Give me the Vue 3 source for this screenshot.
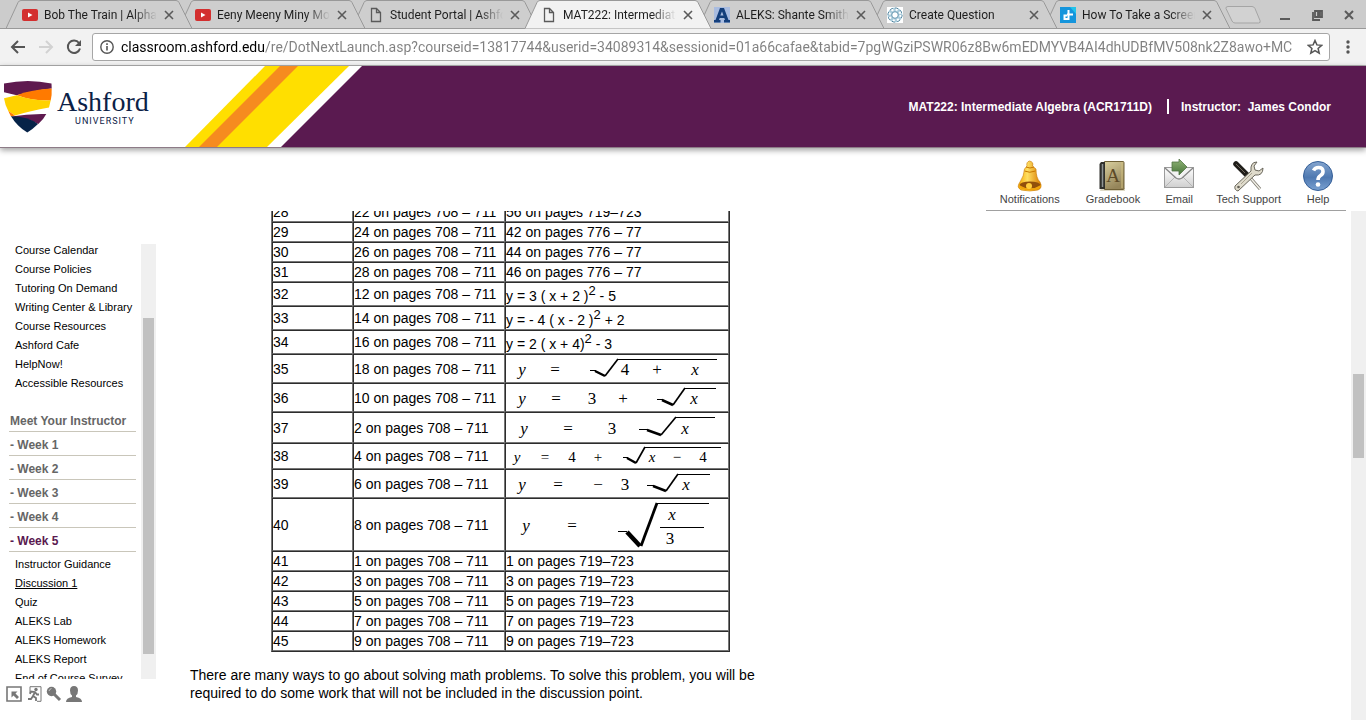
<template>
  <div class="browser">

    <!-- Tab strip -->
    <div class="tab-strip">
      <div
        v-for="(tab, i) in tabs"
        :key="tab.title"
        class="tab"
        :class="{ active: tab.active }"
        :style="{ zIndex: tab.active ? 20 : 10 - i }"
      >
        <svg class="tab-shape" viewBox="0 0 186 29" preserveAspectRatio="none">
          <path d="M0 28.5 L12 2.5 Q13 .5 15 .5 H170 Q172 .5 173 2.5 L186 28.5" />
        </svg>
        <svg class="favicon" viewBox="0 0 16 16">
          <template v-if="tab.icon === 'youtube'">
            <rect x="0" y="2" width="16" height="12" rx="2" fill="#d32f2f" />
            <path d="M6 5.5v5l4.500-2.500z" fill="#fff" />
          </template>
          <path v-else-if="tab.icon === 'page'" d="M3.500 1.500h5l4 4v9h-9z M8.500 1.500v4h4" fill="none" stroke="#5a5a5a" stroke-width="1.300" />
          <template v-else-if="tab.icon === 'aleks'">
            <rect width="16" height="16" fill="#a9bce0" />
            <path d="M0 15.500v-2.500h1.500L6 1h4l4.500 12H16v2.500h-6V13h1l-.7-2H5.700L5 13h1.500v2.500z M6.300 8.500h3.200L8 4.500z" fill="#143f7c" fill-rule="evenodd" />
          </template>
          <template v-else-if="tab.icon === 'ring'">
            <rect width="16" height="16" fill="#fff" />
            <circle cx="8" cy="8" r="5.500" fill="none" stroke="#a9cbdb" stroke-width="4" />
            <circle cx="8" cy="8" r="7" fill="none" stroke="#4d7f99" stroke-width="1" stroke-dasharray="3 2.500" />
            <circle cx="8" cy="8" r="5.500" fill="none" stroke="#fff" stroke-width="2" stroke-dasharray="2 2.320" />
            <circle cx="8" cy="8" r="3.300" fill="none" stroke="#5f93ad" stroke-width="1" />
          </template>
          <template v-else>
            <rect width="16" height="16" fill="#1595dc" />
            <path d="M10 0h6v7z" fill="#22c3ea" />
            <path d="M8.500 3v10 M7 7.500h6 M8.500 12H4.500V8.500H7" fill="none" stroke="#fff" stroke-width="2" />
          </template>
        </svg>
        <span class="tab-title">{{ tab.title }}</span>
        <button class="tab-close" aria-label="Close tab">
          <svg viewBox="0 0 10 10" width="10" height="10"><path d="M1 1l8 8M9 1l-8 8" stroke="#5a5a5a" stroke-width="1.600" /></svg>
        </button>
      </div>
      <button class="new-tab" aria-label="New tab">
        <svg viewBox="0 0 36 18" width="36" height="18"><path d="M3 .5h24q2 0 3 2l5 12q1 2.500-1.500 2.500H10q-2 0-3-2L1 2.500Q.5.5 3 .5z" fill="#d2d2d2" stroke="#a5a5a5" /></svg>
      </button>
      <div class="window-controls">
        <button aria-label="Minimize"><svg viewBox="0 0 12 12" width="12" height="12"><path d="M1 10h10" stroke="#5a5a5a" stroke-width="2" /></svg></button>
        <button aria-label="Restore"><svg viewBox="0 0 12 12" width="12" height="12"><path d="M4 2h7v6H4zM2 3v8h7M7 4h2v2H7z" fill="none" stroke="#5a5a5a" stroke-width="1.800" /></svg></button>
        <button aria-label="Close"><svg viewBox="0 0 12 12" width="12" height="12"><path d="M2 2l8 8M10 2l-8 8" stroke="#5a5a5a" stroke-width="2" /></svg></button>
      </div>
    </div>

    <!-- Address bar -->
    <div class="address-bar">
      <button class="nav-btn" aria-label="Back">
        <svg viewBox="0 0 16 16" width="16" height="16"><path d="M15 8H2M8 2L2 8l6 6" fill="none" stroke="#555" stroke-width="2" /></svg>
      </button>
      <button class="nav-btn" aria-label="Forward">
        <svg viewBox="0 0 16 16" width="16" height="16"><path d="M1 8h13M8 2l6 6-6 6" fill="none" stroke="#d2d2d2" stroke-width="2" /></svg>
      </button>
      <button class="nav-btn" aria-label="Reload">
        <svg viewBox="0 0 16 16" width="16" height="16"><path d="M13 4A6.200 6.200 0 1 0 14 9.500" fill="none" stroke="#555" stroke-width="2" /><path d="M15 1v6H9z" fill="#555" /></svg>
      </button>
      <div class="omnibox">
        <svg viewBox="0 0 14 14" width="14" height="14"><circle cx="7" cy="7" r="6.200" fill="none" stroke="#555" stroke-width="1.400" /><path d="M7 6v4.500M7 3.300v1.600" stroke="#555" stroke-width="1.600" /></svg>
        <input v-model="url" class="url" type="text" aria-label="Address" spellcheck="false" />
        <button aria-label="Bookmark">
          <svg viewBox="0 0 16 16" width="16" height="16"><path d="M8 1.500l1.900 4.400 4.800.4-3.600 3.200 1.100 4.700L8 11.700l-4.200 2.500 1.100-4.700L1.300 6.300l4.800-.4z" fill="none" stroke="#555" stroke-width="1.500" /></svg>
        </button>
      </div>
      <button class="menu-btn" aria-label="Menu">
        <svg viewBox="0 0 4 14" width="4" height="14"><g fill="#555"><circle cx="2" cy="2" r="1.700" /><circle cx="2" cy="7" r="1.700" /><circle cx="2" cy="12" r="1.700" /></g></svg>
      </button>
    </div>

    <!-- Course header -->
    <header class="course-header">
      <a class="brand" href="#">
        <svg class="shield" viewBox="0 0 48 52" width="48" height="52">
          <path d="M0 2.600Q24-2.600 47.500 2.600L47.700 7.600Q28 10 12.700 14.300L0 11.300z" fill="#5f1a4f" />
          <path d="M47.700 7.600Q48 14 46.700 19.500Q28 20 12.700 14.300Q28 8.500 47.700 7.600z" fill="#ff7a00" />
          <path d="M0 17.300L12.700 14.300Q28 20 46.700 19.300L45 26.600Q26 30 11 34.600L4.300 30Q1 24 0 17.300z" fill="#ffd200" />
          <path d="M4.300 30L11 34.600L7 35.500z" fill="#ff7a00" />
          <path d="M7 35.500Q25 32.500 42.300 33Q39.500 38.500 34.300 43Q24 37 7 35.500z" fill="#5f1a4f" />
          <path d="M7 35.300Q24 35.500 34 43Q29 48 23.300 51.500Q13 45.500 7 35.300z" fill="#062348" />
        </svg>
        <span class="brand-text">
          <span class="brand-name">Ashford</span>
          <span class="brand-sub">UNIVERSITY</span>
        </span>
      </a>
      <svg class="stripes" viewBox="0 0 182 81" width="182" height="81">
        <path d="M0 0H182L101 81H0z" fill="#fff" />
        <path d="M85 0H169L87 81H5z" fill="#ffdf00" />
        <path d="M100 0H118L37 81H19z" fill="#f68b1f" />
      </svg>
      <div class="course-info">
        <span>MAT222: Intermediate Algebra (ACR1711D)</span>
        <span class="divider"></span>
        <span>Instructor:&nbsp; James Condor</span>
      </div>
    </header>

    <!-- Shortcuts -->
    <div class="shortcut-row">
      <nav class="shortcuts">
        <a href="#" class="shortcut roomy">
          <svg viewBox="0 0 30 30" width="30" height="30">
            <defs>
              <linearGradient id="gold"><stop offset="0" stop-color="#f5a800" /><stop offset=".4" stop-color="#ffdf62" /><stop offset="1" stop-color="#d97b00" /></linearGradient>
            </defs>
            <path d="M12 5Q11 1 14.500 0Q19 1 17.500 5L21 8Q21 17 25 21Q28 27 23 29Q15 31 6 29Q1 26 5 21Q9 15 9.500 8z" fill="url(#gold)" stroke="#c87800" stroke-width=".6" />
            <path d="M11 6q4 2 8 0M9.500 10q5 2.500 11 0" fill="none" stroke="#c77700" />
            <ellipse cx="15" cy="24" rx="10.500" ry="3.500" fill="#92500b" />
            <path d="M4 24q11 7 22 0q1 5-11 5.500Q4 29 4 24z" fill="#f0a40a" />
            <circle cx="14" cy="25" r="3" fill="#ffcf3c" />
          </svg>
          <span>Notifications</span>
        </a>
        <a href="#" class="shortcut roomy">
          <svg viewBox="0 0 30 30" width="30" height="30">
            <defs>
              <linearGradient id="cover" x2=".4" y2="1"><stop offset="0" stop-color="#d9cf9e" /><stop offset="1" stop-color="#95855a" /></linearGradient>
            </defs>
            <path d="M3 27h24v3H2z" fill="#ded9c6" />
            <rect x="6" y=".5" width="20" height="28" rx="1" fill="url(#cover)" stroke="#6f6036" />
            <path d="M3 1h4v27H1.500V3z" fill="#30302c" />
            <path d="M4.500 3v23" stroke="#8f9495" stroke-width="1.500" />
            <path d="M24 1v26" stroke="#d0bf80" />
            <text x="15" y="21" text-anchor="middle" class="book-letter">A</text>
          </svg>
          <span>Gradebook</span>
        </a>
        <a href="#" class="shortcut">
          <svg viewBox="0 0 30 30" width="30" height="30">
            <defs>
              <linearGradient id="paper" x2="0" y2="1"><stop offset="0" stop-color="#fff" /><stop offset="1" stop-color="#cfcfcf" /></linearGradient>
              <linearGradient id="arrow" x2="0" y2="1"><stop offset="0" stop-color="#91b477" /><stop offset="1" stop-color="#47753a" /></linearGradient>
            </defs>
            <rect x=".5" y="6.500" width="29" height="20" fill="url(#paper)" stroke="#9b9b9b" />
            <path d="M1 26l10-10M29 26L19 16" stroke="#b5b5b5" />
            <path d="M1 7l11 10q3 2 6 0L29 7" fill="#f3f3f3" stroke="#858585" stroke-width="1.300" />
            <path d="M8 1h7V-2l8 8-8 8v-4H8z" fill="url(#arrow)" stroke="#527545" stroke-width=".8" />
          </svg>
          <span>Email</span>
        </a>
        <a href="#" class="shortcut">
          <svg viewBox="0 0 30 30" width="30" height="30">
            <path d="M13 13L26 28" stroke="#7a776c" stroke-width="3" />
            <path d="M13 13L26 28" stroke="#f2f0e8" stroke-width="1.500" />
            <path d="M2 3l11 11" stroke="#201e1a" stroke-width="5.500" stroke-linecap="round" />
            <path d="M2 3l9 9" stroke="#70695e" stroke-width="1" />
            <path d="M23 1q-7 0-6 9L1 25q-1 4 3 5L21 14q8 1 8-7l-4 3-4-1-1-4z" fill="#dedacb" stroke="#69665b" />
            <circle cx="4.500" cy="26" r="1.300" fill="#625f56" />
            <path d="M7 23L18 12" stroke="#aaa491" />
          </svg>
          <span>Tech Support</span>
        </a>
        <a href="#" class="shortcut">
          <svg viewBox="0 0 30 30" width="30" height="30">
            <defs>
              <linearGradient id="globe" x2="0" y2="1"><stop offset="0" stop-color="#84a5cf" /><stop offset=".55" stop-color="#4f79b1" /><stop offset="1" stop-color="#7aa1d1" /></linearGradient>
            </defs>
            <circle cx="15" cy="15" r="14.500" fill="url(#globe)" stroke="#355f98" />
            <path d="M10.500 9.500Q12 6.500 15.500 6.500Q20 6.500 20 10.500Q20 13 17.500 14.500Q15 16 15 19" fill="none" stroke="#fff" stroke-width="3.600" />
            <circle cx="15" cy="23.500" r="2.300" fill="#fff" />
          </svg>
          <span>Help</span>
        </a>
      </nav>
    </div>

    <div class="course-body">

      <!-- Sidebar -->
      <aside class="sidebar">
        <div class="side-scroll">
          <nav class="side-nav">
            <a v-for="item in courseLinks" :key="item" href="#" class="side-link">{{ item }}</a>
            <div class="sections">
              <a v-for="s in sections" :key="s" href="#" class="section" :class="{ current: s === '- Week 5' }">{{ s }}</a>
            </div>
            <a v-for="item in weekLinks" :key="item" href="#" class="side-link" :class="{ selected: item === 'Discussion 1' }">{{ item }}</a>
          </nav>
          <div class="side-bar"><div class="side-thumb"></div></div>
        </div>
        <div class="side-tools">
          <button aria-label="Collapse">
            <svg viewBox="0 0 16 16" width="16" height="16"><path d="M1 1h14v14H1z" fill="none" stroke="#777" stroke-width="1.600" /><path d="M5.500 5.500h6l-2 2 3.500 3.500-2 2-3.500-3.500-2 2z" fill="#777" /></svg>
          </button>
          <button aria-label="Exit">
            <svg viewBox="0 0 16 16" width="16" height="16"><path d="M4 7V.7h11v14.600h-4" fill="none" stroke="#777" /><circle cx="10" cy="3.500" r="1.700" fill="#777" /><path d="M9 6L7 10l3 2v3M7 10l-2 3H2M4 8l1-2.500 4 .5 2 2.500h2" fill="none" stroke="#777" stroke-width="1.800" /></svg>
          </button>
          <button aria-label="Search">
            <svg viewBox="0 0 16 16" width="16" height="16"><circle cx="5.500" cy="5.500" r="4.700" fill="#777" /><path d="M8 8l6 6" stroke="#777" stroke-width="3" /><path d="M3 5q.5-2 2.500-2.500" stroke="#c5c5c5" fill="none" /></svg>
          </button>
          <button aria-label="Profile">
            <svg viewBox="0 0 16 16" width="16" height="16"><path d="M8 0q4 0 4 4.500Q12 8 10 9.500v1.500q6 1 6 5H0q0-4 6-5V9.500Q4 8 4 4.500Q4 0 8 0z" fill="#777" /></svg>
          </button>
        </div>
      </aside>

      <!-- Discussion content -->
      <main class="content">
        <div class="post">
          <table class="problems">
            <tbody>
              <tr v-for="row in rows" :key="row.no">
                <td class="col-no">{{ row.no }}</td>
                <td class="col-pages">{{ row.first }} on pages 708 – 711</td>
                <td v-if="row.eq" class="col-eq">
                  <svg class="equation" :viewBox="`0 0 222 ${row.eq.h}`" width="222" :height="row.eq.h">
                    <text
                      v-for="(g, i) in row.eq.glyphs"
                      :key="i"
                      :x="g[1]"
                      :y="g[2] ?? row.eq.base"
                      :class="{ variable: g[0] === 'x' || g[0] === 'y', small: row.eq.small }"
                    >{{ g[0] }}</text>
                    <path :d="row.eq.line" class="thin" />
                    <path :d="row.eq.down" :class="row.eq.heavy ? 'heavy' : 'down'" />
                    <path :d="row.eq.up" :class="row.eq.heavy ? 'heavy-up' : 'up'" />
                  </svg>
                </td>
                <td v-else-if="row.power" class="col-power">{{ row.power[0] }}<sup>2</sup>{{ row.power[1] }}</td>
                <td v-else>{{ row.second }}</td>
              </tr>
            </tbody>
          </table>
          <p class="note">
            There are many ways to go about solving math problems. To solve this problem, you will be
            required to do some work that will not be included in the discussion point.
          </p>
        </div>
      </main>

      <div class="page-bar"><div class="page-thumb"></div></div>
    </div>

  </div>
</template>

<script setup>
import { ref } from 'vue'

const url = ref('classroom.ashford.edu/re/DotNextLaunch.asp?courseid=13817744&userid=34089314&sessionid=01a66cafae&tabid=7pgWGziPSWR06z8Bw6mEDMYVB4AI4dhUDBfMV508nk2Z8awo+MC')

const tabs = [
  { title: 'Bob The Train | Alphabet', icon: 'youtube' },
  { title: 'Eeny Meeny Miny Moe', icon: 'youtube' },
  { title: 'Student Portal | Ashford', icon: 'page' },
  { title: 'MAT222: Intermediate', icon: 'page', active: true },
  { title: 'ALEKS: Shante Smith', icon: 'aleks' },
  { title: 'Create Question', icon: 'ring' },
  { title: 'How To Take a Screenshot', icon: 'plus' },
]

const courseLinks = [
  'Course Calendar', 'Course Policies', 'Tutoring On Demand', 'Writing Center & Library',
  'Course Resources', 'Ashford Cafe', 'HelpNow!', 'Accessible Resources',
]
const sections = ['Meet Your Instructor', '- Week 1', '- Week 2', '- Week 3', '- Week 4', '- Week 5']
const weekLinks = [
  'Instructor Guidance', 'Discussion 1', 'Quiz', 'ALEKS Lab',
  'ALEKS Homework', 'ALEKS Report', 'End of Course Survey',
]

// glyphs: [text, x, optional baseline]
const rows = [
  { no: 28, first: 22, second: '56 on pages 719–723' },
  { no: 29, first: 24, second: '42 on pages 776 – 77' },
  { no: 30, first: 26, second: '44 on pages 776 – 77' },
  { no: 31, first: 28, second: '46 on pages 776 – 77' },
  { no: 32, first: 12, power: ['y = 3 ( x + 2 )', ' - 5'] },
  { no: 33, first: 14, power: ['y = - 4 ( x - 2 )', ' + 2'] },
  { no: 34, first: 16, power: ['y = 2 ( x + 4)', ' - 3'] },
  { no: 35, first: 18, eq: {
    h: 27, base: 20, glyphs: [['y', 16], ['=', 49], ['4', 119], ['+', 151], ['x', 189]],
    line: 'M84 15.5H90 M112 4.500H211', down: 'M89 16L99 21', up: 'M99 21L112 4',
  } },
  { no: 36, first: 10, eq: {
    h: 27, base: 20, glyphs: [['y', 16], ['=', 50], ['3', 86], ['+', 117], ['x', 188]],
    line: 'M151 15.500H157 M179 4.500H210', down: 'M156 16L167 21', up: 'M167 21L179 4',
  } },
  { no: 37, first: 2, eq: {
    h: 29, base: 21, glyphs: [['y', 18], ['=', 62], ['3', 106], ['x', 179]],
    line: 'M133 16.500H142 M170 4.500H209', down: 'M141 17L155 22', up: 'M155 22L170 4',
  } },
  { no: 38, first: 4, eq: {
    h: 24, base: 18, small: true, glyphs: [['y', 11], ['=', 39], ['4', 66], ['+', 92], ['x', 146], ['−', 171], ['4', 197]],
    line: 'M117 13.500H122 M139 3.500H215', down: 'M121 14L130 19', up: 'M130 19L139 3',
  } },
  { no: 39, first: 6, eq: {
    h: 27, base: 20, glyphs: [['y', 16], ['=', 52], ['−', 92], ['3', 119], ['x', 180]],
    line: 'M141 15.500H148 M172 4.500H204', down: 'M147 16L160 21', up: 'M160 21L172 4',
  } },
  { no: 40, first: 8, eq: {
    h: 51, base: 32, heavy: true, glyphs: [['y', 20], ['=', 66], ['x', 166, 21], ['3', 164, 45]],
    line: 'M112 32.500H121 M151 4.500H203 M154 28.500H198', down: 'M121 33L134 47', up: 'M135 47L151 4',
  } },
  { no: 41, first: 1, second: '1 on pages 719–723' },
  { no: 42, first: 3, second: '3 on pages 719–723' },
  { no: 43, first: 5, second: '5 on pages 719–723' },
  { no: 44, first: 7, second: '7 on pages 719–723' },
  { no: 45, first: 9, second: '9 on pages 719–723' },
]
</script>

<style>
body { background: #fff; overflow: hidden; }
</style>

<style scoped>
.browser {
  height: 100vh;
  display: flex;
  flex-direction: column;
  overflow: hidden;
  font-family: "Liberation Sans", Arial, sans-serif;
  font-size: 14px;
  color: #000;
}
a { color: inherit; text-decoration: none; }
button { padding: 0; border: 0; background: none; display: flex; align-items: center; justify-content: center; }
svg { display: block; flex-shrink: 0; }

/* Tab strip */
.tab-strip {
  flex-shrink: 0;
  display: flex;
  height: 29px;
  padding-left: 6px;
  background: #ccc;
  box-shadow: inset 0 -1px #999;
  font-family: Roboto, sans-serif;
}
.tab {
  position: relative;
  display: flex;
  align-items: center;
  flex: 0 1 186px;
  min-width: 0;
  margin-right: -13px;
  padding: 0 18px 0 16px;
  box-sizing: border-box;
}
.tab-shape { position: absolute; inset: 0; width: 100%; height: 100%; fill: #cecece; stroke: #999; }
.tab:not(.active)::after { content: ''; position: absolute; left: 0; right: 0; bottom: 0; height: 1px; background: #999; }
.active .tab-shape { fill: #f2f2f2; }
.favicon { position: relative; width: 16px; height: 16px; }
.tab-title {
  position: relative;
  flex: 1;
  margin: 0 7px 0 6px;
  overflow: hidden;
  white-space: nowrap;
  font-size: 12px;
  line-height: 16px;
  color: #1e1e1e;
  mask-image: linear-gradient(to left, transparent, #000 24px);
}
.tab-close { position: relative; width: 10px; height: 10px; }
.new-tab { margin: 6px 0 0 8px; width: 36px; height: 18px; }
.window-controls { display: flex; gap: 20px; margin-left: auto; padding-right: 11px; }

/* Address bar */
.address-bar {
  flex-shrink: 0;
  display: flex;
  align-items: center;
  height: 36px;
  padding: 0 16px 0 10px;
  background: #f2f2f2;
  border-bottom: 1px solid #b0b0b0;
}
.nav-btn { width: 16px; height: 28px; margin-right: 12px; }
.omnibox {
  flex: 1;
  min-width: 0;
  display: flex;
  align-items: center;
  height: 26px;
  margin: 0 16px 0 -2px;
  padding: 0 6px 0 7px;
  background: #fff;
  border: 1px solid #a6a6a6;
  border-radius: 3px;
}
.url {
  flex: 1;
  min-width: 0;
  margin: 0 6px 0 7px;
  padding: 0;
  border: 0;
  outline: 0;
  font-family: Roboto, sans-serif;
  font-size: 14px;
  line-height: 20px;
  color: transparent;
  background: linear-gradient(to right, #000 144px, #808080 144px);
  background-clip: text;
  -webkit-background-clip: text;
}
.menu-btn { width: 4px; height: 28px; }

/* Course header */
.course-header {
  flex-shrink: 0;
  display: flex;
  align-items: center;
  height: 81px;
  background: #5a1a50;
  border-bottom: 1px solid #8d7b87;
  box-shadow: 0 2px 6px rgba(0, 0, 0, 0.4);
}
.brand {
  display: flex;
  align-items: center;
  width: 180px;
  height: 81px;
  padding-left: 4px;
  box-sizing: border-box;
  background: #fff;
  color: #0b2147;
}
.brand-text { display: flex; flex-direction: column; align-items: center; margin-left: 5px; }
.brand-name { font-family: "Liberation Serif", serif; font-size: 28px; line-height: 28px; }
.brand-sub { padding-left: 4px; font-family: Roboto, sans-serif; font-size: 9px; line-height: 10px; letter-spacing: 1px; }
.course-info {
  display: flex;
  align-items: center;
  margin-left: auto;
  padding-right: 35px;
  white-space: nowrap;
  font-size: 12px;
  font-weight: bold;
  color: #fff;
}
.divider { width: 2px; height: 15px; margin: 0 12px 0 15px; background: #fff; }

/* Shortcuts */
.shortcut-row { flex-shrink: 0; display: flex; justify-content: flex-end; padding-right: 20px; }
.shortcuts {
  display: flex;
  align-items: flex-end;
  gap: 22px;
  height: 62px;
  padding: 0 13px 0 12px;
  border-bottom: 1px solid #a0a0a0;
}
.shortcut { display: flex; flex-direction: column; align-items: center; font-size: 11px; line-height: 14px; color: #444; padding-bottom: 4px; }
.shortcut svg { margin-bottom: 1px; overflow: visible; }
.roomy { padding-left: 2px; padding-right: 2px; }
.book-letter { font-family: "Liberation Serif", serif; font-size: 19px; fill: #5d4a27; }

/* Body */
.course-body { flex: 1; min-height: 0; display: flex; }
.sidebar { width: 156px; flex-shrink: 0; display: flex; flex-direction: column; padding-top: 33px; }
.side-scroll { flex: 1; min-height: 0; display: flex; overflow: hidden; }
.side-nav { flex: 1; margin-top: -3px; padding: 0 5px 0 9px; }
.side-link { display: block; padding-left: 6px; font-size: 11px; line-height: 19px; white-space: nowrap; }
.selected { text-decoration: underline; }
.sections { margin: 15px 0 3px; }
.section {
  display: block;
  padding: 4px 0 0 1px;
  border-bottom: 1px solid #c9c6ba;
  font-size: 12px;
  font-weight: bold;
  line-height: 19px;
  color: #666;
}
.section.current { color: #5a1a50; }
.side-bar { width: 15px; background: #f0f0f0; }
.side-thumb { height: 336px; margin: 74px 2px 0; background: #c1c1c1; }
.side-tools { display: flex; gap: 4px; height: 41px; padding: 7px 0 0 6px; box-sizing: border-box; align-items: flex-start; }

.content { flex: 1; min-width: 0; overflow: hidden; padding-left: 34px; }
.post { max-width: 621px; margin-top: -10px; }
.problems {
  margin: 0 auto;
  border-spacing: 0;
  border: 1px solid;
  border-color: #767676 #2c2c2c #2c2c2c #767676;
  line-height: 18px;
}
.problems td {
  padding: 0;
  border: 1px solid;
  border-color: #2c2c2c #767676 #767676 #2c2c2c;
  white-space: nowrap;
}
.col-no { width: 79px; }
.col-pages { width: 150px; }
.problems .col-power { padding-top: 4px; }
.col-power sup { font-size: 13px; line-height: 0; }
.equation { font-family: "Liberation Serif", serif; }
.equation text { font-size: 17px; text-anchor: middle; }
.equation .variable { font-style: italic; }
.equation .small { font-size: 15px; }
.equation path { fill: none; stroke: #000; }
.equation .thin { stroke-width: 1; }
.equation .down { stroke-width: 2.500; }
.equation .up { stroke-width: 1.700; }
.equation .heavy { stroke-width: 4.500; }
.equation .heavy-up { stroke-width: 2.800; }
.note { margin: 14px 0 0; padding-right: 20px; line-height: 18px; }

.page-bar { width: 15px; flex-shrink: 0; background: #f0f0f0; }
.page-thumb { height: 84px; margin: 163px 2px 0; background: #c1c1c1; }
</style>
